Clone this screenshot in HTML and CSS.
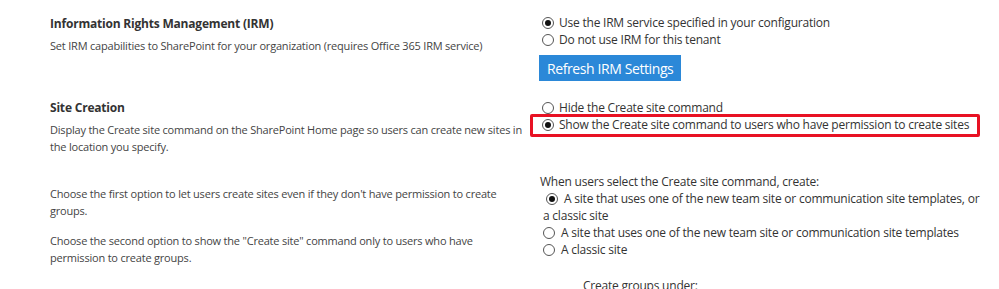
FILE: index.html
```html
<!DOCTYPE html>
<html lang="en">
<head>
    <meta charset="UTF-8">
    <title>Settings</title>
    <link rel="stylesheet" href="styles.css">
</head>
<body>
    <div class="settings">

        <!-- IRM -->
        <div class="section irm">
            <div class="info">
                <h3>Information Rights Management (IRM)</h3>
                <p>Set IRM capabilities to SharePoint for your organization (requires Office 365 IRM service)</p>
            </div>
            <div class="options">
                <label class="radio checked"><span class="dot"></span>Use the IRM service specified in your configuration</label>
                <label class="radio"><span class="dot"></span>Do not use IRM for this tenant</label>
                <button class="btn">Refresh IRM Settings</button>
            </div>
        </div>

        <!-- Site creation -->
        <div class="section creation">
            <div class="info">
                <h3>Site Creation</h3>
                <p>Display the Create site command on the SharePoint Home page so users can create new sites in the location you specify.</p>
            </div>
            <div class="options">
                <label class="radio"><span class="dot"></span>Hide the Create site command</label>
                <label class="radio checked highlight"><span class="dot"></span>Show the Create site command to users who have permission to create sites</label>
            </div>
        </div>

        <div class="section templates">
            <div class="info">
                <p>Choose the first option to let users create sites even if they don't have permission to create groups.</p>
                <p>Choose the second option to show the "Create site" command only to users who have permission to create groups.</p>
            </div>
            <div class="options">
                <div class="caption">When users select the Create site command, create:</div>
                <label class="radio checked wrap"><span class="dot"></span>A site that uses one of the new team site or communication site templates, or a classic site</label>
                <label class="radio"><span class="dot"></span>A site that uses one of the new team site or communication site templates</label>
                <label class="radio"><span class="dot"></span>A classic site</label>
                <div class="sub">Create groups under:</div>
            </div>
        </div>

    </div>
</body>
</html>
```

FILE: styles.css
```css
body {
    margin: 0;
    font-family: "Open Sans", "Noto Sans", sans-serif;
    color: #333;
    background: #fff;
}
.settings {
    padding: 15px 0 0 50px;
}
.section {
    display: grid;
    grid-template-columns: 476px 440px;
    column-gap: 14px;
}
.info h3 {
    margin: 0;
    font-size: 12px;
    line-height: 17px;
    font-weight: 700;
    letter-spacing: -0.2px;
    color: #333;
}
.info p {
    margin: 5px 0 0;
    font-size: 11px;
    line-height: 17px;
    letter-spacing: -0.2px;
    color: #444;
}
.options {
    font-size: 12px;
    line-height: 17px;
    letter-spacing: -0.22px;
    color: #333;
}
.irm .options {
    margin-top: -1px;
}
.radio {
    display: flex;
    align-items: flex-start;
    gap: 5px;
    padding-left: 2px;
    position: relative;
}
.dot {
    flex: none;
    width: 10px;
    height: 10px;
    margin-top: 3px;
    border: 1px solid #555;
    border-radius: 50%;
    position: relative;
    background: #fff;
}
.checked .dot::after {
    content: "";
    position: absolute;
    left: 2px;
    top: 2px;
    width: 6px;
    height: 6px;
    border-radius: 50%;
    background: #111;
}
.wrap {
    display: block;
    padding-left: 0;
}
.wrap .dot {
    display: inline-block;
    vertical-align: top;
    margin: 3px 6px 0 3px;
}
.templates .radio {
    padding-left: 3px;
    gap: 6px;
}
.btn {
    display: block;
    margin: 7px 0 0 -1px;
    height: 26px;
    padding: 0 8px;
    border: none;
    background: #2b88d8;
    color: #fff;
    font-family: inherit;
    font-size: 14px;
    letter-spacing: -0.4px;
}
.highlight::after {
    content: "";
    position: absolute;
    left: -10px;
    right: 0;
    top: -2px;
    bottom: -4px;
    border: 3px solid #e81123;
    border-radius: 2px;
}
.creation {
    margin-top: 18px;
}
.templates {
    margin-top: 18px;
}
.templates .info {
    padding-top: 12px;
}
.templates .info p {
    margin: 0 0 13px;
}
.sub {
    margin: 19px 0 0 43px;
}
```
